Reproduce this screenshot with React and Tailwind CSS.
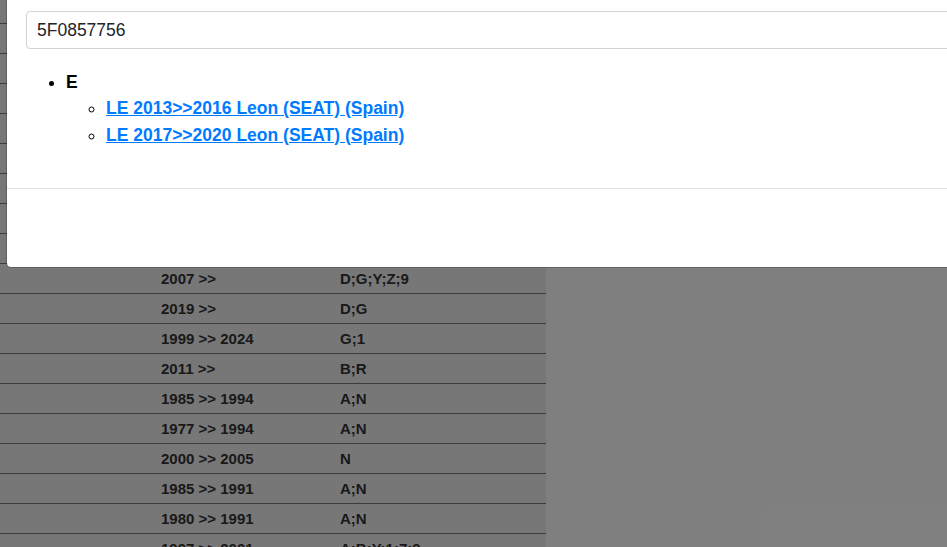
export default function App() {
  const rows = [
    ["", ""], ["", ""], ["", ""], ["", ""], ["", ""], ["", ""], ["", ""], ["", ""], ["", ""],
    ["2007 >>", "D;G;Y;Z;9"],
    ["2019 >>", "D;G"],
    ["1999 >> 2024", "G;1"],
    ["2011 >>", "B;R"],
    ["1985 >> 1994", "A;N"],
    ["1977 >> 1994", "A;N"],
    ["2000 >> 2005", "N"],
    ["1985 >> 1991", "A;N"],
    ["1980 >> 1991", "A;N"],
    ["1997 >> 2001", "A;B;Y;1;7;9"],
  ];
  return (
    <div className="relative h-[547px] w-[947px] overflow-hidden bg-white" style={{ fontFamily: '"Liberation Sans", Arial, sans-serif' }}>
      <div className="-mt-[6px] w-[546px]">
        {rows.map((r, i) => (
          <div key={i} className="flex h-[30px] items-center border-b border-[#7a7a7a] bg-[#efefef] pt-[2px] text-[15px] font-bold text-[#333]">
            <div className="w-[161px]" />
            <div className="w-[179px]">{r[0]}</div>
            <div>{r[1]}</div>
          </div>
        ))}
      </div>
      <div className="absolute inset-0 bg-black/50" />
      <div className="absolute left-[6px] top-[-20px] w-[1000px] rounded-[5px] border border-black/20 bg-white bg-clip-padding text-[17.5px] leading-[1.5] text-[#212529]">
        <div className="border-b border-[#dee2e6] pl-[19px] pr-4 pt-[30px] pb-[40px]">
          <div className="flex h-[38px] items-center rounded-[4px] border border-[#ced4da] px-[10px]">5F0857756</div>
          <ul className="mt-[20px] list-disc pl-[40px]">
            <li className="font-bold text-black">
              E
              <ul className="list-[circle] pl-[40px]">
                <li><a href="#" className="text-[#007bff] underline">LE 2013&gt;&gt;2016 Leon (SEAT) (Spain)</a></li>
                <li><a href="#" className="text-[#007bff] underline">LE 2017&gt;&gt;2020 Leon (SEAT) (Spain)</a></li>
              </ul>
            </li>
          </ul>
        </div>
        <div className="h-[78px]" />
      </div>
    </div>
  );
}
